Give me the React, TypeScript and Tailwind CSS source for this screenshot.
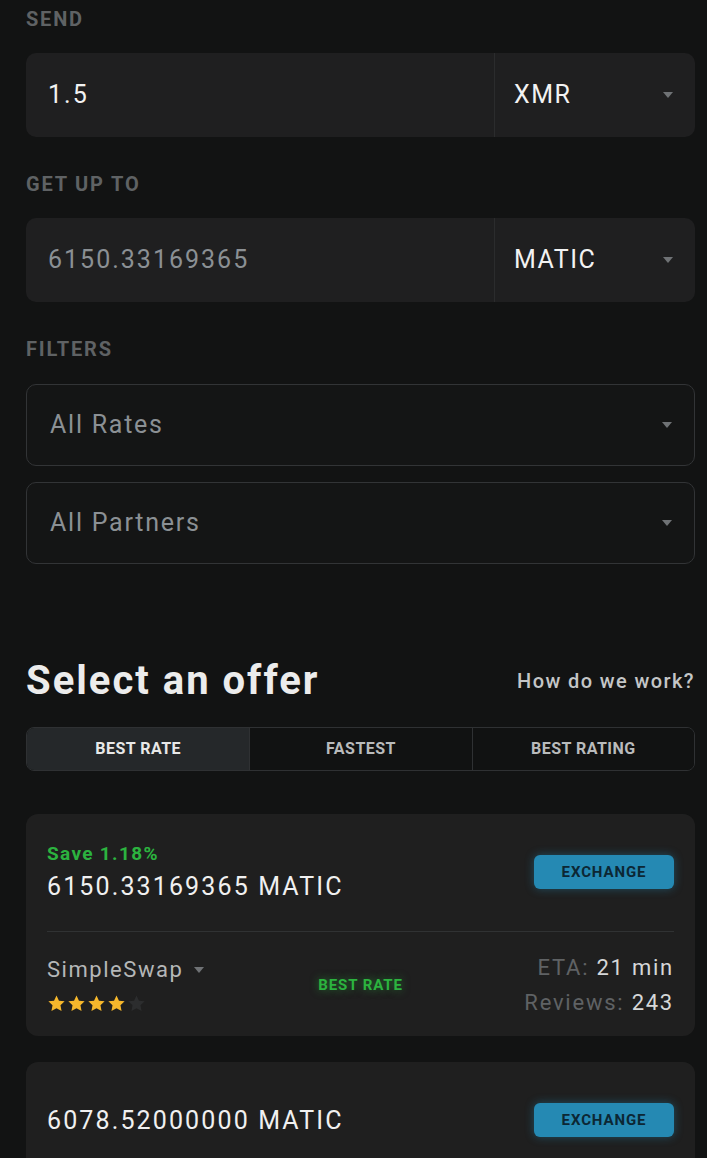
import React from 'react';

const font = { fontFamily: 'Roboto, "Noto Sans", sans-serif' };

function Caret({ className = '' }: { className?: string }) {
  return (
    <svg width="10" height="6" viewBox="0 0 10 6" className={className}>
      <path d="M0 0 L10 0 L5 6 Z" fill="currentColor" />
    </svg>
  );
}

function Star({ on }: { on: boolean }) {
  return (
    <svg width="19" height="19" viewBox="0 0 24 24">
      <path
        d="M12 1.8l3.1 6.6 7.2.9-5.3 5 1.4 7.1L12 17.9l-6.4 3.5 1.4-7.1-5.3-5 7.2-.9z"
        fill={on ? '#f6b72c' : '#2c2d2e'}
      />
    </svg>
  );
}

function AmountField({ value, coin, muted }: { value: string; coin: string; muted?: boolean }) {
  return (
    <div className="flex h-[84px] rounded-[10px] bg-[#1f1f20] overflow-hidden">
      <div className={`flex-1 flex items-center pl-[22px] text-[25px] tracking-[0.08em] ${muted ? 'text-[#8b9094]' : 'text-[#f2f2f2]'}`}>
        {value}
      </div>
      <div className="w-[201px] border-l border-[#2b2c2d] flex items-center justify-between pl-[19px] pr-[22px] text-[25px] tracking-[0.06em] text-[#f2f2f2]">
        {coin}
        <Caret className="text-[#6f7275]" />
      </div>
    </div>
  );
}

function FilterSelect({ label }: { label: string }) {
  return (
    <div className="flex h-[82px] items-center justify-between rounded-[10px] border border-[#323436] bg-[#141515] pl-[23px] pr-[22px] text-[25px] tracking-[0.07em] text-[#8b9094]">
      {label}
      <Caret className="text-[#6f7275]" />
    </div>
  );
}

function Label({ children }: { children: React.ReactNode }) {
  return <div className="text-[20px] font-bold uppercase tracking-[0.09em] text-[#5f6264] leading-none">{children}</div>;
}

function ExchangeButton() {
  return (
    <button className="w-[140px] h-[34px] rounded-[6px] bg-[#2589b3] text-[15px] font-bold tracking-[0.06em] text-[#0c2734] shadow-[0_0_10px_rgba(37,137,179,0.45)]">
      EXCHANGE
    </button>
  );
}

export default function App() {
  const tabs = ['BEST RATE', 'FASTEST', 'BEST RATING'];
  return (
    <div className="min-h-[1158px] bg-[#121313] pl-[26px] pr-[12px] pt-[9px]" style={font}>
      <Label>Send</Label>
      <div className="mt-[24px]">
        <AmountField value="1.5" coin="XMR" />
      </div>

      <div className="mt-[37px]">
        <Label>Get up to</Label>
      </div>
      <div className="mt-[24px]">
        <AmountField value="6150.33169365" coin="MATIC" muted />
      </div>

      <div className="mt-[37px]">
        <Label>Filters</Label>
      </div>
      <div className="mt-[25px] flex flex-col gap-[16px]">
        <FilterSelect label="All Rates" />
        <FilterSelect label="All Partners" />
      </div>

      <div className="mt-[97px] flex items-center justify-between">
        <h1 className="text-[40px] font-bold tracking-[0.05em] text-[#ececec] leading-none">Select an offer</h1>
        <a className="text-[20px] font-medium tracking-[0.07em] text-[#c4c6c7]">How do we work?</a>
      </div>

      <div className="mt-[26px] grid grid-cols-3 h-[44px] rounded-[8px] border border-[#2f3133] overflow-hidden">
        {tabs.map((t, i) => (
          <div
            key={t}
            className={`flex items-center justify-center text-[16px] font-bold tracking-[0.03em] ${
              i === 0 ? 'bg-[#25282a] text-[#e8e8e8]' : 'bg-[#111212] text-[#b9bbbc] border-l border-[#2f3133]'
            }`}
          >
            {t}
          </div>
        ))}
      </div>

      <div className="mt-[43px] rounded-[12px] bg-[#1f1f1f] px-[21px] pt-[30px] pb-[22px]">
        <div className="flex items-start justify-between">
          <div>
            <div className="text-[19px] font-bold tracking-[0.07em] text-[#2cb33f] leading-none">Save 1.18%</div>
            <div className="mt-[11px] text-[25px] tracking-[0.085em] text-[#f0f0f0] leading-none">6150.33169365 MATIC</div>
          </div>
          <div className="mt-[11px]">
            <ExchangeButton />
          </div>
        </div>
        <div className="mt-[32px] h-px bg-[#303233]" />
        <div className="mt-[25px] flex items-center">
          <div className="flex-1">
            <div className="flex items-center gap-[11px] text-[22px] tracking-[0.07em] text-[#b5b7b8] leading-none">
              SimpleSwap
              <Caret className="text-[#6f7275]" />
            </div>
            <div className="mt-[13px] flex gap-[1px]">
              <Star on />
              <Star on />
              <Star on />
              <Star on />
              <Star on={false} />
            </div>
          </div>
          <div className="text-[15px] font-bold tracking-[0.06em] text-[#2cb33f] [text-shadow:0_0_8px_rgba(44,179,63,0.6)]">
            BEST RATE
          </div>
          <div className="flex-1 text-right text-[22px] tracking-[0.08em] leading-none">
            <div>
              <span className="text-[#5f6264]">ETA: </span>
              <span className="text-[#d6d7d8]">21 min</span>
            </div>
            <div className="mt-[13px]">
              <span className="text-[#5f6264]">Reviews: </span>
              <span className="text-[#d6d7d8]">243</span>
            </div>
          </div>
        </div>
      </div>

      <div className="mt-[26px] rounded-[12px] bg-[#1f1f1f] px-[21px] pt-[41px] pb-[40px]">
        <div className="flex items-center justify-between">
          <div className="text-[25px] tracking-[0.085em] text-[#f0f0f0] leading-none">6078.52000000 MATIC</div>
          <ExchangeButton />
        </div>
      </div>
    </div>
  );
}
